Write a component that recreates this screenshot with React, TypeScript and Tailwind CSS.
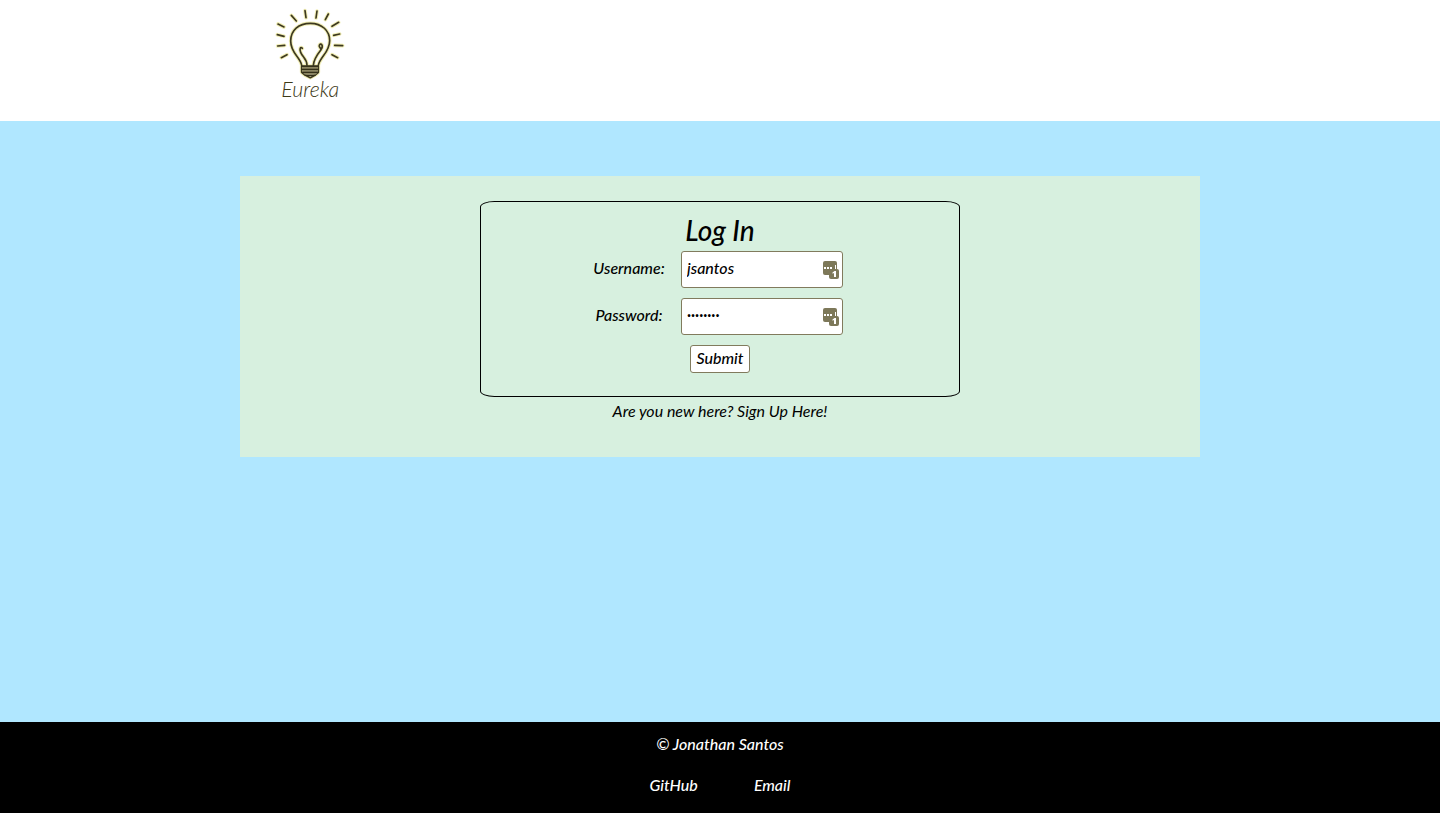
import { useState } from "react";

function Logo() {
  return (
    <svg viewBox="0 0 270 315" className="h-[105px] w-[90px]" role="img" aria-label="Eureka">
      {[
        { color: "#f0edb4", width: 11 },
        { color: "#3d3920", width: 5 },
      ].map(({ color, width }) => (
        <g key={color} fill="none" stroke={color} strokeWidth={width} strokeLinecap="round" strokeLinejoin="round">
          <path d="M39 72l18 9M37 104l20 5M38 138l21-2M49 173l17-9M79 46l15 17M120 32l3 21M156 33l-3 21M190 42l-9 17M221 67l-20 12M224 102l-18 4M233 137l-24-1M218 173l-17-9" />
          <path d="M110 196C106 171 77 160 77 123C77 91 101 70 136 70C171 70 194 92 194 122C194 157 164 172 160 196" />
          <path d="M126 196C126 177 113 172 107 157C103 147 106 138 112 145M145 196C146 177 157 163 168 149C177 135 167 127 163 136C161 143 168 142 168 149" />
          <path d="M110 198H160V217L151 225L136 233L120 225L110 217Z" />
        </g>
      ))}
      <path d="M112 199h47v18l-8 7h-31l-8-7Z" fill="#8b8560" />
      <path d="M110 199h50M110 208h50M113 217h45M121 226h29" stroke="#353119" strokeWidth="4" strokeLinecap="round" />
      <text x="49" y="291" fontSize="64" fontStyle="italic" fontWeight="300" fill="#3d3917" fontFamily="Lato, sans-serif">
        Eureka
      </text>
    </svg>
  );
}

function FillBadge() {
  return (
    <svg viewBox="0 0 16 18" className="pointer-events-none absolute top-[10px] right-[4px] h-[18px] w-4" aria-hidden="true">
      <rect width="14" height="14" rx="2" fill="#7d7859" />
      <path d="M1 6h2v2H1zM4 6h2v2H4zM7 6h2v2H7zM12 4h1v4h-1z" fill="#fff" />
      <rect x="6" y="8" width="10" height="10" rx="2" fill="#7d7859" />
      <path d="M9.500 11.500l2-1.500h1.500v6h-2v-4l-1.500.8z" fill="#fff" />
    </svg>
  );
}

type FieldProps = {
  id: string;
  label: string;
  type: string;
  value: string;
  onChange: (value: string) => void;
};

function Field({ id, label, type, value, onChange }: FieldProps) {
  return (
    <div className="flex items-center">
      <label htmlFor={id} className="flex w-[68px] justify-center pb-1 whitespace-nowrap">
        {label}
      </label>
      <div className="relative ml-[18px]">
        <input
          id={id}
          type={type}
          value={value}
          onChange={(event) => onChange(event.target.value)}
          className={
            type === "password"
              ? "h-[37px] w-[162px] rounded-[3px] border border-[#817b5d] bg-white pr-6 pb-1 pl-[5px] text-[7px]"
              : "h-[37px] w-[162px] rounded-[3px] border border-[#817b5d] bg-white pr-6 pb-1 pl-[5px]"
          }
        />
        <FillBadge />
      </div>
    </div>
  );
}

export default function App() {
  const [username, setUsername] = useState("jsantos");
  const [password, setPassword] = useState("passw0rd");

  return (
    <div className="flex min-h-screen flex-col bg-[#b0e7ff] font-['Lato','Open_Sans',sans-serif] text-base leading-6 text-black italic">
      <header className="bg-white pb-4">
        <div className="mx-auto w-2/3 pl-[25px]">
          <a href="#home" className="inline-block align-top">
            <Logo />
          </a>
        </div>
      </header>

      <main className="flex-1 py-[55px]">
        <section className="mx-auto flex w-2/3 flex-col items-center bg-[#d7f0df] pt-[25px] pb-[34px]">
          <form
            onSubmit={(event) => event.preventDefault()}
            className="flex w-1/2 flex-col items-center rounded-[3%] border border-black pt-3 pb-[23px] font-medium"
          >
            <h1 className="mb-[5px] text-[28px] leading-8 font-medium">Log In</h1>
            <div className="flex flex-col gap-[10px] pr-[2px]">
              <Field id="username" label="Username:" type="text" value={username} onChange={setUsername} />
              <Field id="password" label="Password:" type="password" value={password} onChange={setPassword} />
            </div>
            <button type="submit" className="mt-[10px] h-7 w-[60px] rounded-[3px] border border-[#817b5d] bg-white pb-1">
              Submit
            </button>
          </form>
          <p className="mt-[2px]">
            Are you new here? <a href="#signup">Sign Up Here!</a>
          </p>
        </section>
      </main>

      <footer className="bg-black pt-[10px] pb-4 text-center font-medium text-white">
        <p>© Jonathan Santos</p>
        <nav className="mt-[17px] flex justify-center gap-14">
          <a href="#github">GitHub</a>
          <a href="#email">Email</a>
        </nav>
      </footer>
    </div>
  );
}
